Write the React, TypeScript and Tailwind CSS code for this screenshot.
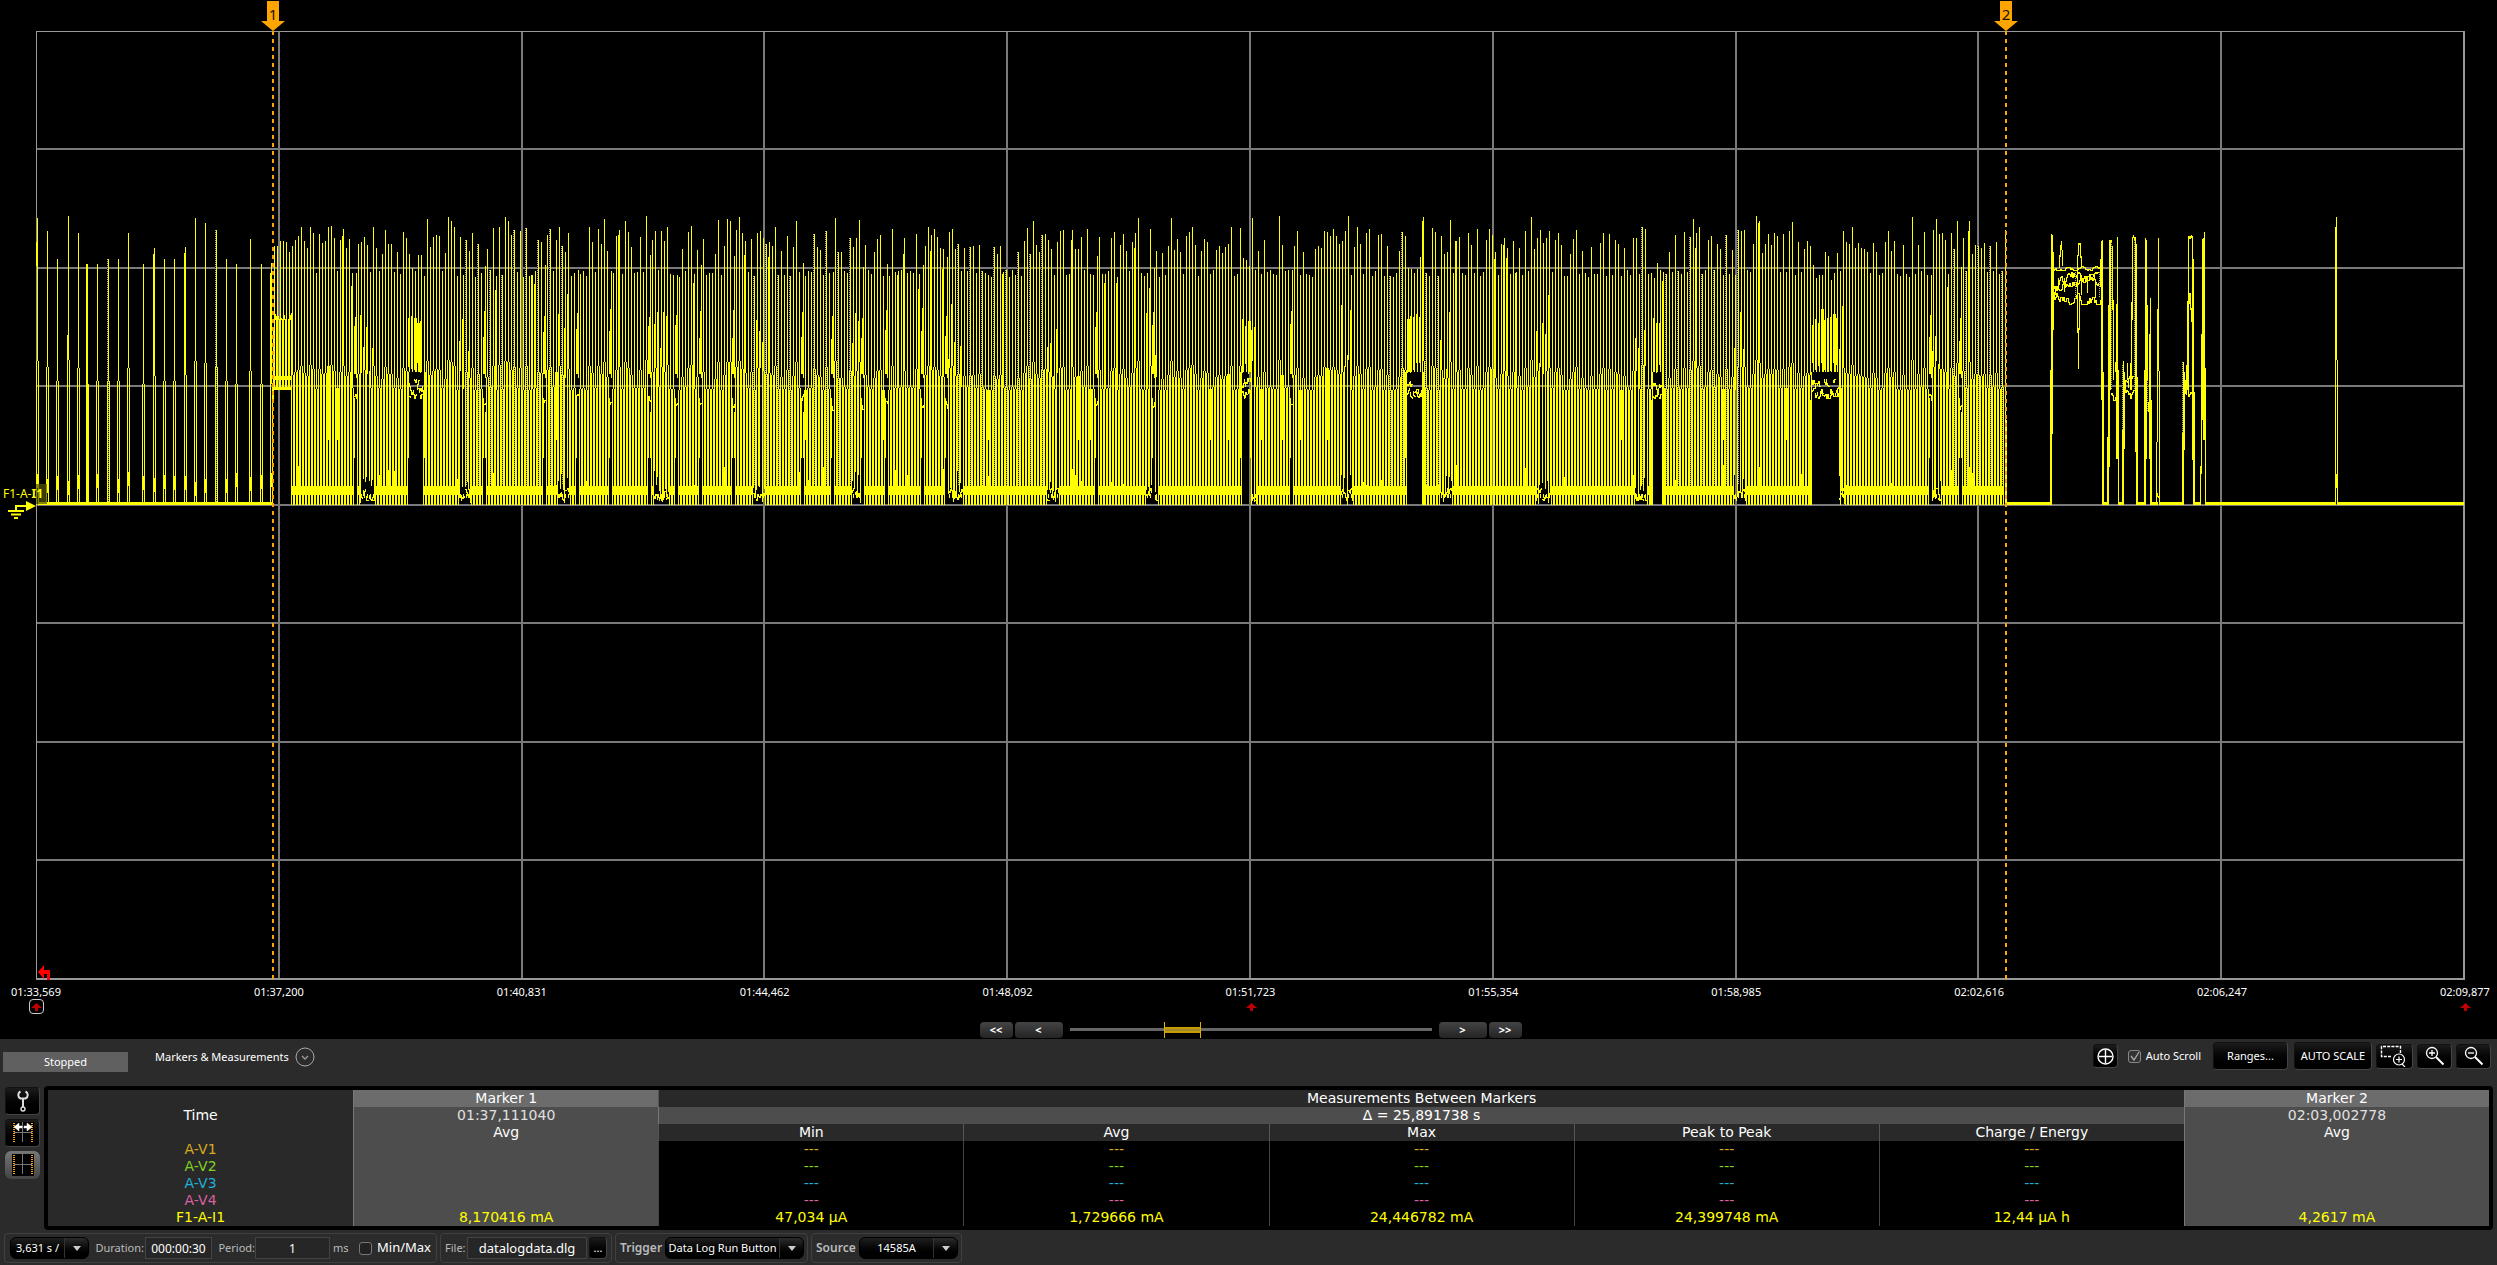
import type { ReactNode } from "react";
import { clsx } from "clsx";

const X0 = 36;
const X1 = 2464;
const Y0 = 31;
const Y1 = 979;
const BASE = 505;

const TIMES = [
  "01:33,569",
  "01:37,200",
  "01:40,831",
  "01:44,462",
  "01:48,092",
  "01:51,723",
  "01:55,354",
  "01:58,985",
  "02:02,616",
  "02:06,247",
  "02:09,877",
];

// x, top, knee
const SPIKES = [
  [37, 218, 361],
  [47, 231, 367],
  [57, 259, 381],
  [68, 216, 360],
  [78, 233, 368],
  [87, 264, 384],
  [97, 264, 381],
  [108, 259, 381],
  [118, 259, 381],
  [128, 233, 368],
  [143, 264, 384],
  [154, 248, 376],
  [164, 259, 381],
  [174, 259, 381],
  [185, 247, 375],
  [195, 218, 361],
  [205, 223, 363],
  [216, 230, 367],
  [226, 259, 381],
  [236, 264, 384],
  [250, 239, 371],
  [261, 264, 384],
  [271, 263, 384],
  [2336, 217, 360],
];

const WIDE_GAPS = [
  [409, 423],
  [1241, 1249],
  [1406, 1421],
  [1653, 1661],
  [1812, 1838],
];

const NARROW_GAPS = [
  354, 484, 545, 578, 609, 648, 676, 700, 733, 801, 832, 862, 885, 921, 947, 1095, 1154,
  1290, 1930, 1961,
];

const DOTTED = [
  [466, 562],
  [752, 860],
  [940, 1050],
  [1384, 1446],
  [1634, 1744],
  [1950, 2004],
];

const within = (ranges: number[][], x: number) => ranges.some(([a, b]) => x >= a && x <= b);

function buildTrace() {
  let seed = 90210;
  const rnd = () => {
    seed = (seed * 1664525 + 1013904223) % 4294967296;
    return seed / 4294967296;
  };
  let solid = "";
  let dots = "";
  const col = (x: number, a: number, b: number) => {
    solid += `M${x}.5 ${Math.round(a)}V${Math.round(b)}`;
  };
  const dot = (x: number, a: number, b: number) => {
    dots += `M${x}.5 ${Math.round(a)}V${Math.round(b)}`;
  };
  // jittery line that wanders between lo and hi
  const noise = (from: number, to: number, lo: number, hi: number) => {
    let y = lo + rnd() * (hi - lo);
    for (let x = from; x <= to; x++) {
      const step = (rnd() - 0.5) * Math.min(10, hi - lo);
      const next = Math.max(lo, Math.min(hi, y + step));
      col(x, Math.min(y, next), Math.max(y, next) + 1);
      y = next;
    }
  };

  for (const [x, top, knee] of SPIKES) {
    col(x, top, knee);
    col(x - 1, knee, BASE);
    col(x + 1, knee, BASE);
    const block = 472 + rnd() * 10;
    col(x, block, block + 14);
    if (x === 87) {
      col(x, top, BASE);
      col(x - 1, top, BASE);
    }
    if (x === 68) col(x - 1, 335, 360);
    if (x === 154 || x === 185) col(x - 1, top + 6, knee);
    if (x === 108 || x === 216) {
      dot(x - 1, top, knee);
      dot(x, knee, BASE);
    }
    if (x === 271 || x === 2336) col(x - 1, top + 10, knee);
  }

  // burst right after marker 1
  for (let x = 274; x < 291; x++) {
    if (x % 3 === 1) col(x, 240 + rnd() * 14, 389);
    else col(x, 314 + rnd() * 6, x % 3 === 0 ? 389 : 320);
    if (x % 3 === 2) col(x, 376, 380);
    col(x, 387, 390);
  }
  col(273, 327, 400);
  col(274, 372, 389);
  col(291, 313, 458);

  // pulse train
  for (let x = 292; x < 2005; x += 3) {
    const wide = within(WIDE_GAPS, x);
    const narrow = NARROW_GAPS.some((g) => Math.abs(g - x) <= 1);
    const r = rnd();
    const top = r < 0.3 ? 270 + rnd() * 7 : r > 0.94 ? 216 + rnd() * 6 : 226 + rnd() * 28;
    const knee = 360 + (top - 216) / 2;
    const low = (x - 292) % 98;

    if (wide) {
      const shoulder = 309 + rnd() * 18;
      col(x, 250 + rnd() * 30, 372);
      col(x - 1, shoulder, 362 + rnd() * 12);
      if (rnd() > 0.75) col(x + 1, shoulder, 372);
      noise(x - 1, x + 1, 378, 394);
      noise(x - 1, x + 1, 388, 398);
      continue;
    }
    if (narrow) {
      col(x, 308 + rnd() * 10, 374);
      col(x - 1, 322 + rnd() * 20, 374);
      col(x + 1, 255 + rnd() * 20, 378);
      noise(x - 1, x + 1, 394, 410);
      col(x - 1, 398, 458);
      if (rnd() > 0.5) col(x + 1, 412, 458);
      continue;
    }

    col(x, top, knee);
    const isDotted = within(DOTTED, x) && (x - 466) % 12 === 0;
    if (isDotted) {
      dot(x - 1, top, knee);
      dot(x, knee, 485);
    }
    if (low >= 69 && low <= 81) {
      col(x - 1, knee - rnd() * 80, 470 + rnd() * 35);
      if (rnd() > 0.3) col(x + 1, knee, 480 + rnd() * 25);
      noise(x - 1, x + 1, 488, 500);
      col(x, 494, 498);
      continue;
    }
    col(x - 1, knee, BASE);
    col(x + 1, knee, BASE);
    col(x, 486, 495);
    if (rnd() < 0.09) col(x, 465 + rnd() * 20, 486);
    const odd = rnd();
    if (odd < 0.03) col(x, knee, 440);
    else if (odd < 0.08) col(x - 1, top + rnd() * 20, knee);
  }
  for (const [a, b] of WIDE_GAPS) {
    col(a - 2, 400, BASE);
    col(a - 1, 372, 458);
    col(b + 1, 390, 458);
    col(b + 2, 372, BASE);
  }

  // tail after marker 2
  col(2005, 230, BASE);
  col(2006, 420, BASE);

  col(2050, 370, 503);
  col(2051, 234, 503);
  col(2052, 235, 434);
  col(2053, 252, 330);
  noise(2053, 2102, 266, 270);
  noise(2054, 2102, 272, 290);
  noise(2054, 2102, 274, 296);
  noise(2053, 2102, 293, 304);
  for (const x of [2058, 2064, 2075, 2081, 2087, 2095]) {
    col(x, 272 + rnd() * 8, 286 + rnd() * 12);
  }
  col(2059, 255, 268);
  col(2060, 245, 257);
  col(2061, 241, 250);
  col(2062, 250, 266);
  col(2077, 255, 333);
  col(2078, 243, 256);
  col(2078, 328, 369);
  col(2079, 243, 245);
  col(2079, 295, 330);
  col(2080, 243, 258);
  col(2081, 256, 268);
  dot(2075, 272, 300);
  dot(2099, 272, 298);
  col(2100, 259, 285);
  col(2101, 241, 400);
  col(2102, 240, 505);
  col(2103, 372, 505);

  col(2107, 437, 503);
  col(2108, 305, 503);
  col(2109, 240, 467);
  col(2110, 240, 390);
  dot(2111, 242, 390);
  col(2111, 240, 246);
  col(2112, 246, 310);
  col(2113, 300, 380);
  noise(2111, 2116, 384, 400);
  col(2115, 362, 372);
  col(2116, 304, 459);
  col(2117, 237, 459);
  col(2118, 370, 505);

  col(2122, 430, 503);
  col(2123, 361, 503);
  dot(2122, 365, 430);
  col(2124, 372, 449);
  col(2125, 380, 392);
  noise(2125, 2134, 376, 386);
  noise(2125, 2136, 384, 398);
  col(2127, 363, 380);
  col(2128, 378, 388);
  col(2130, 363, 390);
  col(2131, 302, 390);
  col(2132, 237, 320);
  col(2133, 235, 238);
  dot(2134, 240, 390);
  col(2134, 237, 240);
  col(2134, 306, 320);
  col(2135, 237, 452);
  col(2136, 244, 505);
  col(2137, 377, 505);

  col(2144, 370, 503);
  col(2145, 238, 503);
  col(2146, 240, 459);
  dot(2147, 380, 412);
  col(2147, 305, 380);
  col(2148, 402, 412);
  col(2149, 334, 459);
  col(2150, 298, 505);
  col(2151, 400, 505);

  col(2156, 442, 503);
  col(2157, 309, 442);
  col(2158, 238, 371);
  col(2159, 371, 505);
  noise(2157, 2158, 490, 497);

  col(2182, 433, 503);
  col(2183, 362, 503);
  dot(2182, 362, 433);
  col(2184, 372, 450);
  col(2185, 380, 394);
  col(2186, 365, 395);
  col(2187, 301, 390);
  col(2188, 236, 392);
  col(2189, 236, 239);
  col(2189, 293, 304);
  col(2190, 236, 239);
  col(2190, 293, 310);
  col(2191, 235, 238);
  col(2191, 308, 322);
  noise(2188, 2192, 388, 398);
  col(2192, 236, 460);
  col(2193, 259, 505);
  col(2194, 392, 505);

  col(2200, 466, 503);
  col(2201, 334, 474);
  col(2202, 239, 420);
  col(2203, 238, 440);
  col(2204, 232, 440);
  col(2205, 368, 505);

  return { solid, dots };
}

const trace = buildTrace();

const BASELINES = [
  [38, 272],
  [2006, 2052],
  [2102, 2109],
  [2118, 2124],
  [2136, 2146],
  [2150, 2158],
  [2159, 2184],
  [2193, 2201],
  [2205, 2336],
  [2337, 2464],
];

function MarkerFlag({ x, label }: { x: number; label: string }) {
  return (
    <g>
      <path d={`M${x} 31V979`} stroke="#ffa500" strokeWidth="2" strokeDasharray="4 4" />
      <path
        d={`M${x - 6} 1H${x + 6}V21H${x + 12}L${x} 31L${x - 12} 21H${x - 6}Z`}
        fill="#ffa500"
      />
      <text
        x={x}
        y="20"
        textAnchor="middle"
        fontSize="15"
        fill="#1c1200"
        className="font-['Noto_Sans',sans-serif]"
      >
        {label}
      </text>
    </g>
  );
}

function Chart() {
  const cols = TIMES.map((_, i) => Math.round(X0 + (i * (X1 - X0)) / 10));
  const rows = Array.from({ length: 9 }, (_, i) => Math.floor(Y0 + (i * (Y1 - Y0)) / 8));
  return (
    <svg viewBox="0 0 2497 980" className="block w-full" role="img" aria-label="F1-A-I1">
      <g shapeRendering="crispEdges" fill="none">
        <g stroke="#7a7a7a" strokeWidth="2">
          {cols.slice(1, -1).map((x) => (
            <path key={x} d={`M${x} ${Y0}V${Y1}`} />
          ))}
          {rows.slice(1, -1).map((y) => (
            <path key={y} d={`M${X0} ${y}H${X1}`} />
          ))}
        </g>
        <path d="M36 31.5H2464M36.5 31V979" stroke="#999" strokeWidth="1" />
        <path d="M36 979H2465M2464 31V979" stroke="#999" strokeWidth="2" />
        <path d={trace.solid} stroke="#ffff00" strokeWidth="1" />
        <path d={trace.dots} stroke="#000" strokeWidth="1" />
        <path d={trace.dots} stroke="#b8b8a0" strokeWidth="1" strokeDasharray="1 1" />
        <path
          d={BASELINES.map(([a, b]) => `M${a} 503.5H${b}`).join("")}
          stroke="#ffff00"
          strokeWidth="3"
        />
        <path d="M36.5 242V266" stroke="#ffff00" />
      </g>

      <rect x="36" y="484" width="11" height="20" fill="#555500" opacity="0.7" />
      <text
        x="3"
        y="498"
        fontSize="12"
        fill="#ffff00"
        className="font-['Noto_Sans',sans-serif]"
      >
        F1-A-<tspan fontWeight="700">I1</tspan>
      </text>
      <path
        d="M8 511H24M11 514.5H21M14 518H18M16 511V506H27"
        stroke="#ffff00"
        strokeWidth="2"
        fill="none"
      />
      <path d="M26 501L36 506L26 511Z" fill="#ffff00" />

      <path d="M38 972L44 965V970H50V981H47V974H44V979Z" fill="#ff0000" />

      <MarkerFlag x={273} label="1" />
      <MarkerFlag x={2006} label="2" />
    </svg>
  );
}

function RedArrow() {
  return (
    <svg width="11" height="8" viewBox="0 0 11 8" aria-hidden="true">
      <path d="M5.5 0L11 5H7V8H4V5H0Z" fill="#c00000" />
    </svg>
  );
}

function NavButton({ className, children }: { className: string; children: ReactNode }) {
  return (
    <button
      className={clsx(
        "flex h-4 items-center justify-center rounded bg-linear-to-b from-[#444] to-[#242424] text-[11px] leading-4 font-bold text-white",
        className,
      )}
    >
      {children}
    </button>
  );
}

function PanelButton({
  className,
  label,
  children,
}: {
  className: string;
  label?: string;
  children: ReactNode;
}) {
  return (
    <button
      aria-label={label}
      className={clsx(
        "flex items-center justify-center rounded border border-[#111] border-r-[#444] border-b-[#444] bg-linear-to-b from-[#1c1c1c] to-black text-white",
        className,
      )}
    >
      {children}
    </button>
  );
}

function Cursors({ arrows = false }: { arrows?: boolean }) {
  return (
    <svg width="22" height="22" viewBox="0 0 22 22" fill="none" aria-hidden="true">
      <rect width="22" height="22" fill="#000" />
      <path d="M10.5 0V20M2 10.5H20" stroke="#777" />
      <path d="M2 1V21M20 1V21" stroke="#ffa500" strokeWidth="2" strokeDasharray="1 1" />
      {arrows && (
        <path
          d="M2 5L7 1V4H10V6H7V9ZM20 5L15 1V4H12V6H15V9Z"
          fill="#fff"
          stroke="#fff"
          strokeWidth="0.5"
        />
      )}
    </svg>
  );
}

const CHANNELS = [
  { name: "A-V1", color: "text-[#d8ab1e]" },
  { name: "A-V2", color: "text-[#7fd320]" },
  { name: "A-V3", color: "text-[#1fb0d6]" },
  { name: "A-V4", color: "text-[#d8629f]" },
];

const STATS = [
  { title: "Min", value: "47,034 µA" },
  { title: "Avg", value: "1,729666 mA" },
  { title: "Max", value: "24,446782 mA" },
  { title: "Peak to Peak", value: "24,399748 mA" },
  { title: "Charge / Energy", value: "12,44 µA h" },
];

function MeasurementsTable() {
  const marker = "border-l border-[#777] bg-[#4d4d4d]";
  return (
    <table className="w-full table-fixed border-separate border-spacing-0 text-center font-['DejaVu_Sans',sans-serif] text-sm leading-[17px] text-white [&_td]:h-[17px] [&_td]:p-0 [&_th]:h-[17px] [&_th]:p-0 [&_th]:font-normal">
      <thead>
        <tr>
          <td className="bg-[#292929]" />
          <th className="border-l border-[#777] bg-[#6c6c6c]">Marker 1</th>
          <th colSpan={5} className="border-l border-[#555] bg-[#292929]">
            Measurements Between Markers
          </th>
          <th className="border-l border-[#777] bg-[#6c6c6c]">Marker 2</th>
        </tr>
        <tr>
          <th className="bg-[#292929]">Time</th>
          <td className={clsx(marker, "text-[#e0e0e0]")}>01:37,111040</td>
          <td colSpan={5} className="border-l border-[#777] bg-[#4d4d4d]">
            Δ = 25,891738 s
          </td>
          <td className={clsx(marker, "text-[#e0e0e0]")}>02:03,002778</td>
        </tr>
        <tr>
          <td className="bg-[#292929]" />
          <th className={marker}>Avg</th>
          {STATS.map((s) => (
            <th key={s.title} className="border-l border-[#555] bg-[#292929]">
              {s.title}
            </th>
          ))}
          <th className={marker}>Avg</th>
        </tr>
      </thead>
      <tbody>
        {CHANNELS.map((c) => (
          <tr key={c.name} className={c.color}>
            <th className="bg-[#292929]">{c.name}</th>
            <td className={marker} />
            {STATS.map((s) => (
              <td key={s.title} className="border-l border-[#444] bg-black">
                ---
              </td>
            ))}
            <td className={marker} />
          </tr>
        ))}
        <tr className="text-[#ffff00]">
          <th className="bg-[#292929]">F1-A-I1</th>
          <td className={marker}>8,170416 mA</td>
          {STATS.map((s) => (
            <td key={s.title} className="border-l border-[#444] bg-black">
              {s.value}
            </td>
          ))}
          <td className={marker}>4,2617 mA</td>
        </tr>
      </tbody>
    </table>
  );
}

function Dropdown({
  id,
  value,
  label,
  className,
}: {
  id: string;
  value: string;
  label?: string;
  className: string;
}) {
  return (
    <div className={clsx("relative h-[22px]", className)}>
      <select
        id={id}
        aria-label={label}
        className="h-full w-full appearance-none rounded-md border border-black bg-linear-to-b from-[#202020] to-black pr-6 text-center text-[11px] text-white"
      >
        <option>{value}</option>
      </select>
      <span className="pointer-events-none absolute inset-y-px right-px flex w-6 items-center justify-center rounded-r-md border-l border-[#333] bg-linear-to-b from-[#2c2c2c] to-black">
        <svg width="8" height="5" viewBox="0 0 8 5" aria-hidden="true">
          <path d="M0 0H8L4 5Z" fill="#ccc" />
        </svg>
      </span>
    </div>
  );
}

const group = "flex h-[30px] items-center rounded border border-[#404040]";
const field = "h-[22px] border border-[#444] bg-[#262626] text-center text-white";

export default function App() {
  return (
    <div className="flex min-h-screen flex-col bg-black font-['Noto_Sans',sans-serif] text-[11px] text-white">
      <Chart />

      <div className="flex h-[19px] justify-between pt-1 pr-[7px] pl-[11px] leading-4">
        {TIMES.map((t) => (
          <span key={t} className="flex w-[50px] justify-center">
            {t}
          </span>
        ))}
      </div>
      <div className="flex h-[15px] items-center justify-between pr-6 pl-[29px]">
        <span className="flex size-[15px] items-center justify-center rounded border border-[#ccc]">
          <RedArrow />
        </span>
        <span className="flex w-[15px] justify-center">
          <RedArrow />
        </span>
        <span className="flex w-[15px] justify-center">
          <RedArrow />
        </span>
      </div>

      <div className="mt-2 mb-px flex h-4 items-center justify-center gap-[2px] pl-1">
        <NavButton className="w-[33px]">&lt;&lt;</NavButton>
        <NavButton className="w-12">&lt;</NavButton>
        <div className="relative mx-[5px] h-4 w-[362px]">
          <div className="h-full py-[6px]">
            <div className="h-[3px] bg-[#666]" />
          </div>
          <div className="absolute inset-y-0 left-[94px] flex w-[37px] items-center border-x border-[#e0b000]">
            <div className="h-[6px] w-full border-y-2 border-[#c89b00] bg-[#a08a30]" />
          </div>
          <input
            type="range"
            aria-label="Scroll position"
            defaultValue={30}
            className="absolute inset-0 w-full opacity-0"
          />
        </div>
        <NavButton className="w-12">&gt;</NavButton>
        <NavButton className="w-[33px]">&gt;&gt;</NavButton>
      </div>

      <div className="flex flex-1 flex-col bg-[#2b2b2b]">
        <div className="flex h-[47px] items-start justify-between pr-[6px] pl-[3px]">
          <div className="flex">
            <div className="mt-[13px] flex h-5 w-[125px] items-center justify-center bg-[#606060]">
              Stopped
            </div>
            <button className="mt-2 ml-[27px] flex h-5 items-center gap-[6px]">
              Markers &amp; Measurements
              <svg width="20" height="20" viewBox="0 0 20 20" fill="none" aria-hidden="true">
                <circle cx="10" cy="10" r="9" stroke="#aaa" />
                <path d="M7 9L10 12L13 9" stroke="#999" strokeWidth="1.4" />
              </svg>
            </button>
          </div>
          <div className="flex h-[34px] items-center">
            <PanelButton className="h-6 w-[25px]" label="Center">
              <svg width="17" height="17" viewBox="0 0 17 17" fill="none" aria-hidden="true">
                <circle cx="8.5" cy="8.5" r="7.5" stroke="#fff" strokeWidth="1.4" />
                <path d="M8.5 2V15M2 8.5H15" stroke="#fff" strokeWidth="1.4" />
              </svg>
            </PanelButton>
            <label className="mr-3 ml-[10px] flex items-center gap-[5px]">
              <span className="relative flex size-[13px]">
                <input
                  type="checkbox"
                  defaultChecked
                  className="size-[13px] appearance-none rounded-[3px] border border-[#888] bg-[#333]"
                />
                <svg
                  width="13"
                  height="13"
                  viewBox="0 0 13 13"
                  fill="none"
                  className="pointer-events-none absolute inset-0"
                  aria-hidden="true"
                >
                  <path d="M3 6L6 10L11 2" stroke="#aaa" strokeWidth="1.3" />
                </svg>
              </span>
              Auto Scroll
            </label>
            <PanelButton className="mr-[6px] h-7 w-[75px]">Ranges...</PanelButton>
            <PanelButton className="mr-1 h-7 w-[78px]">AUTO SCALE</PanelButton>
            <PanelButton className="mr-1 h-[25px] w-[37px]" label="Zoom to area">
              <svg width="30" height="22" viewBox="0 0 30 22" fill="none" aria-hidden="true">
                <path
                  d="M11 11.5H1.5V1.5H20.5V8"
                  stroke="#fff"
                  strokeWidth="1.4"
                  strokeDasharray="3 1.2"
                />
                <circle cx="19" cy="14.5" r="5.5" stroke="#fff" strokeWidth="1.2" />
                <path d="M19 11.5V17.5M16 14.5H22M22 19L25 22" stroke="#fff" strokeWidth="1.2" />
              </svg>
            </PanelButton>
            <PanelButton className="mr-1 h-[25px] w-[35px]" label="Zoom in">
              <svg width="20" height="20" viewBox="0 0 20 20" fill="none" aria-hidden="true">
                <circle cx="7" cy="7" r="5.5" stroke="#fff" strokeWidth="1.3" />
                <path d="M7 4V10M4 7H10" stroke="#fff" strokeWidth="1.3" />
                <path d="M11 11L18.5 18.5" stroke="#fff" strokeWidth="2" />
              </svg>
            </PanelButton>
            <PanelButton className="h-[25px] w-[35px]" label="Zoom out">
              <svg width="20" height="20" viewBox="0 0 20 20" fill="none" aria-hidden="true">
                <circle cx="7" cy="7" r="5.5" stroke="#fff" strokeWidth="1.3" />
                <path d="M4 7H10" stroke="#fff" strokeWidth="1.3" />
                <path d="M11 11L18.5 18.5" stroke="#fff" strokeWidth="2" />
              </svg>
            </PanelButton>
          </div>
        </div>

        <div className="flex gap-1 pr-1 pl-[5px]">
          <div className="flex w-[35px] flex-col gap-1 pt-px">
            <PanelButton className="h-7" label="Settings">
              <svg width="12" height="22" viewBox="0 0 12 22" fill="none" aria-hidden="true">
                <path
                  d="M3.5 1.5C0.5 3 0.5 7 3.5 8.5H8.5C11.5 7 11.5 3 8.5 1.5"
                  stroke="#ddd"
                  strokeWidth="2"
                />
                <path d="M6 9V17" stroke="#ddd" strokeWidth="2" />
                <circle cx="6" cy="19" r="2" stroke="#ddd" strokeWidth="1.4" />
              </svg>
            </PanelButton>
            <PanelButton className="h-7" label="Marker range">
              <Cursors arrows />
            </PanelButton>
            <button
              aria-label="Markers"
              className="flex h-7 items-center justify-center rounded-md bg-linear-to-b from-[#777] to-[#444]"
            >
              <Cursors />
            </button>
          </div>
          <div className="flex-1 rounded-sm border-4 border-black">
            <MeasurementsTable />
          </div>
        </div>

        <div className="flex gap-[3px] pt-[3px] pl-1">
          <div className={clsx(group, "w-[433px] pl-[5px]")}>
            <Dropdown id="scale" label="Time scale" value="3,631 s /" className="w-[79px]" />
            <label htmlFor="duration" className="w-[55px] text-right text-[#bbb]">
              Duration:
            </label>
            <input
              id="duration"
              defaultValue="000:00:30"
              className={clsx(field, "ml-px w-[67px] text-xs")}
            />
            <label htmlFor="period" className="w-[43px] text-right text-[#bbb]">
              Period:
            </label>
            <input id="period" defaultValue="1" className={clsx(field, "w-[75px] text-xs")} />
            <span className="ml-[3px] w-[26px] text-[#bbb]">ms</span>
            <label className="flex items-center gap-[5px] text-[13px]">
              <input
                type="checkbox"
                className="size-[13px] appearance-none rounded-[3px] border border-[#777] bg-[#222]"
              />
              Min/Max
            </label>
          </div>
          <div className={clsx(group, "w-[172px] pl-1")}>
            <label htmlFor="file" className="w-[22px] text-[#bbb]">
              File:
            </label>
            <input
              id="file"
              defaultValue="datalogdata.dlg"
              className={clsx(field, "w-[120px] text-[13px]")}
            />
            <PanelButton className="ml-[2px] h-[22px] w-[18px]" label="Browse">
              ...
            </PanelButton>
          </div>
          <div className={clsx(group, "w-[193px] pl-1")}>
            <label htmlFor="trigger" className="w-[45px] text-xs font-semibold text-[#bbb]">
              Trigger
            </label>
            <Dropdown id="trigger" value="Data Log Run Button" className="w-[139px]" />
          </div>
          <div className={clsx(group, "w-[151px] pl-1")}>
            <label htmlFor="source" className="w-[43px] text-xs font-semibold text-[#bbb]">
              Source
            </label>
            <Dropdown id="source" value="14585A" className="w-[99px]" />
          </div>
        </div>
      </div>
    </div>
  );
}
